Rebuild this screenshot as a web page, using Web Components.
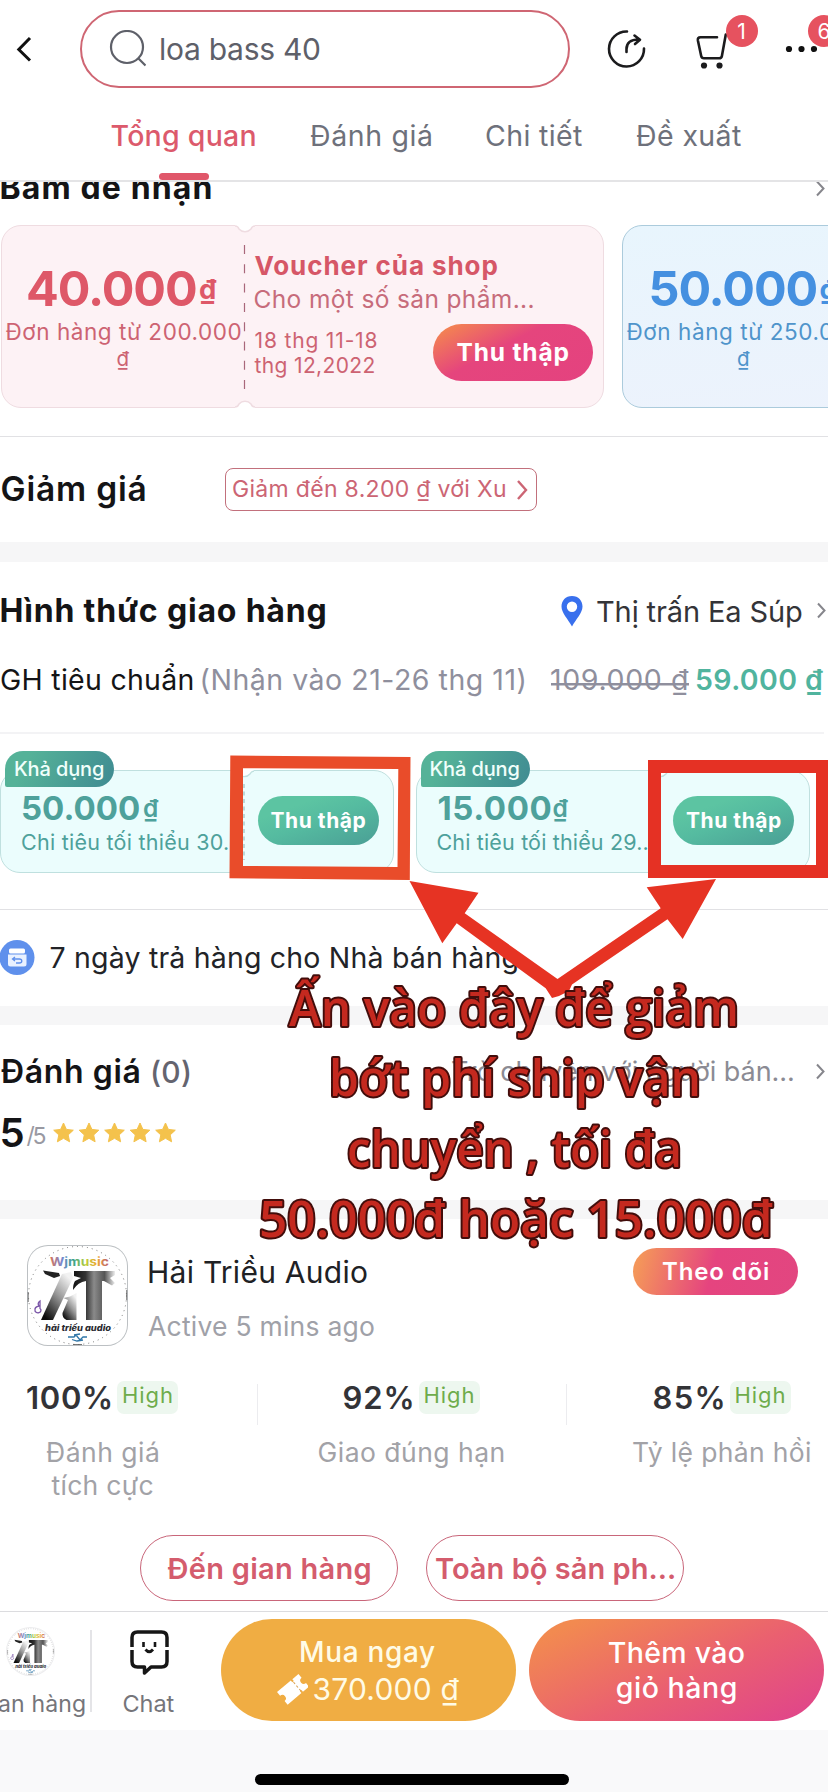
<!DOCTYPE html>
<html lang="vi">
<head>
<meta charset="utf-8">
<title>Hải Triều Audio</title>
<style>
html,body{margin:0;padding:0;background:#fff}
body{font-family:Inter,"Noto Sans","Liberation Sans",sans-serif;width:828px;height:1792px;overflow:hidden}
</style>
</head>
<body>
<product-page></product-page>
<script>
const ctx = document.createElement('canvas').getContext('2d');
const define = (name, html, after) => {
  const tpl = document.createElement('template');
  tpl.innerHTML = html;
  customElements.define(name, class extends HTMLElement {
    connectedCallback() {
      if (this.shadowRoot) return;
      const root = this.attachShadow({ mode: 'open' });
      root.append(tpl.content.cloneNode(true));
      if (after) after(this, root);
    }
  });
};

/* One line of text whose tracking is set so that its ink is exactly "w" pixels wide. */
customElements.define('ui-text', class extends HTMLElement {
  connectedCallback() {
    if (this.shadowRoot) return;
    const root = this.attachShadow({ mode: 'open' });
    root.innerHTML = '<style>:host{display:block;flex:none;white-space:pre;line-height:1}span{display:block;width:max-content}</style><span><slot></slot></span>';
    const size = +this.getAttribute('s'), weight = this.getAttribute('b') || 400, w = +this.getAttribute('w');
    const text = this.textContent, n = [...text].length;
    this.style.fontSize = size + 'px';
    this.style.fontWeight = weight;
    if (this.getAttribute('c')) this.style.color = this.getAttribute('c');
    ctx.font = `${weight} ${size}px Inter, "Noto Sans", sans-serif`;
    const m = ctx.measureText(text);
    const span = root.querySelector('span');
    if (w) {
      const ink = m.actualBoundingBoxLeft + m.actualBoundingBoxRight;
      if (n > 1) span.style.letterSpacing = ((w - ink) / (n - 1)).toFixed(3) + 'px';
      this.style.width = w + 'px';
      span.style.marginLeft = m.actualBoundingBoxLeft.toFixed(2) + 'px';
    }
  }
});

define('ui-chevron', `<style>:host{display:block;flex:none;width:9px;height:17px}svg{display:block}</style>
<svg width="9" height="17" viewBox="0 0 9 17" fill="none" stroke="currentColor" stroke-width="2"><path d="M1 1.500 7.500 8.500 1 15.500"/></svg>`);

define('grey-band', `<style>:host{display:block;background:#f6f6f7}</style>`);

define('count-badge', `<style>:host{position:absolute;display:flex;align-items:center;justify-content:center;width:32px;height:32px;border-radius:50%;background:#e6525f;color:#fff;font-size:21px;line-height:1}</style><slot></slot>`);

define('pill-button', `<style>:host{display:flex;flex:none;flex-direction:column;align-items:center;justify-content:center;box-sizing:border-box;border-radius:60px;color:#fff}</style><slot></slot>`);

define('app-header', `<style>
:host{display:block;height:182px;box-sizing:border-box;border-bottom:2px solid #e4e4e6;background:#fff;position:relative}
.top{display:flex;height:98px;align-items:center}
.back{margin-left:16px}
.box{display:flex;align-items:center;box-sizing:border-box;width:490px;height:78px;margin-left:48px;border:2px solid #cf6673;border-radius:40px;color:#5e6069}
.box svg{margin:0 15px 0 26px}
svg{display:block;flex:none}
.share{margin-left:36.500px}.cart{margin-left:48.500px}.more{margin-left:56px}
.tabs{display:flex;align-items:center;height:76px;color:#6e717b}
.bar{width:50px;height:7px;border-radius:4px;background:#e0576a;margin-left:159px;margin-top:-1px}
</style>
<div class="top">
<svg class="back" width="16" height="26" viewBox="0 0 16 26" fill="none" stroke="#111" stroke-width="3"><path d="M14 2 2.800 13.500 14 24.500"/></svg>
<div class="box"><svg width="38" height="38" viewBox="0 0 38 38" fill="none" stroke="#5e6069" stroke-width="2.200"><circle cx="19" cy="17" r="16"/><path d="m30.500 28.500 7 7"/></svg><ui-text s="30" w="159">loa bass 40</ui-text></div>
<svg class="share" width="40" height="40" viewBox="0 0 40 40" fill="none" stroke="#1b1b1d" stroke-width="2.600" stroke-linecap="round"><path d="M20 2.500A17.500 17.500 0 1 0 37 19.500"/><path d="M19.500 23v-3c0-6 4-9.500 12-9.500M27.500 6.500l5.500 4.200-5 4.300" stroke-linejoin="round"/></svg>
<svg class="cart" width="34" height="40" viewBox="0 0 34 40" fill="none" stroke="#1b1b1d" stroke-width="2.600" stroke-linecap="round" stroke-linejoin="round"><path d="M22 8.300H5.500Q2.300 8.300 2.900 11.500l3.300 15.500Q6.700 29.300 9 29.300H24Q26.500 29.300 26.900 27L30.800 5.500"/><circle cx="9" cy="36.500" r="3.100" fill="#1b1b1d" stroke="none"/><circle cx="24.500" cy="36.500" r="3.100" fill="#1b1b1d" stroke="none"/></svg>
<svg class="more" width="32" height="8" viewBox="0 0 32 8" fill="#111"><circle cx="4" cy="4" r="3.100"/><circle cx="16.500" cy="4" r="3.100"/><circle cx="29" cy="4" r="3.100"/></svg>
</div>
<div class="tabs">
<ui-text s="28.500" b="500" w="144" c="#dc5a6c" style="margin-left:111.500px">Tổng quan</ui-text>
<ui-text s="28.500" w="120" style="margin-left:55.500px">Đánh giá</ui-text>
<ui-text s="28.500" w="96" style="margin-left:55px">Chi tiết</ui-text>
<ui-text s="28.500" w="104" style="margin-left:55px">Đề xuất</ui-text>
</div>
<div class="bar"></div>
<count-badge style="left:725.500px;top:15px">1</count-badge><count-badge style="left:808px;top:15px">6</count-badge>`);

define('shop-voucher', `<style>
:host{display:flex;flex:none;box-sizing:border-box;position:relative;width:603px;height:183px;border:1.500px solid var(--line);border-radius:20px;background:var(--bg);color:var(--ink)}
.left{width:243px;display:flex;flex-direction:column;flex:none}
.amount{display:flex;align-items:center;margin-top:39px;height:48px;margin-left:var(--inset,26px);color:var(--strong)}
.right{display:flex;flex-direction:column;flex:none;width:350px;padding-left:9.500px;box-sizing:border-box}
.notch{position:absolute;left:-1.500px;top:-1.500px}
</style>
<svg class="notch" width="603" height="183" fill="none"><path d="M234 0h20v1q-3 0-4 3a8 8 0 0 1-12 0q-1-3-4-3Z" fill="#fff"/><path d="M234 1q3 0 4 3a8 8 0 0 0 12 0q1-3 4-3" stroke="var(--line)" stroke-width="1.500"/><path d="M234 183h20v-1q-3 0-4-3a8 8 0 0 0-12 0q-1 3-4 3Z" fill="#fff"/><path d="M234 182q3 0 4-3a8 8 0 0 1 12 0q1 3 4 3" stroke="var(--line)" stroke-width="1.500"/><path d="M243.500 20v146" stroke="#a9677a" stroke-width="1.200" stroke-dasharray="9 10.300"/></svg>
<div class="left"><div class="amount"><slot name="amount"></slot><ui-text s="27.500" b="700" w="18" style="margin:1px 0 0 4px">₫</ui-text></div>
<slot name="order"></slot>
<ui-text s="20.500" w="11.500" style="margin:5.500px 0 0 115.500px">₫</ui-text></div>
<div class="right"><slot></slot></div>`, (h, r) => {
  if (h.hasAttribute('plain')) r.querySelector('.notch').remove();
});

define('ship-voucher', `<style>
:host{display:block;flex:none;width:394px;height:103px;box-sizing:border-box;position:relative;border:1.300px solid #bfe0df;border-radius:20px;background:#ebfdfd;color:#4ea19b}
.tag{position:absolute;left:4px;top:-20px;width:109px;height:36px;box-sizing:border-box;border-radius:18px 18px 18px 2px;background:linear-gradient(115deg,#55b298 20%,#3f8b92);color:#f0fffb;display:flex;align-items:center;padding-left:10px}
.row{display:flex;height:100%}
.txt{width:242px;flex:none}
.amount{display:flex;align-items:center;margin:20px 0 0 22px;height:34px}
.notch{position:absolute;left:0;top:-1.500px}
</style>
<svg class="notch" width="390" height="103" fill="none"><path d="M233 0h20v1.500q-3 .5-4 2.500a8 8 0 0 1-12 0q-1-2-4-2.500Z" fill="#fff"/><path d="M233 1q3 .5 4 3a8 8 0 0 0 12 0q1-2.500 4-3" stroke="#bfe0df" stroke-width="1.300"/><path d="M243 14v76" stroke="#8bb5b3" stroke-dasharray="4 3.500"/></svg>
<div class="row"><div class="txt"><div class="amount"><slot name="amount"></slot></div><slot name="rule"></slot></div>
<pill-button style="width:121px;height:49px;margin:25px 0 0 14.500px;background:linear-gradient(160deg,#5cc4a2 25%,#55bba0 50%,#4a9e95)"><ui-text s="21" b="700" w="95">Thu thập</ui-text></pill-button></div>
<div class="tag"><ui-text s="20" b="500" w="88">Khả dụng</ui-text></div>`);

define('shop-logo', `<style>:host{display:block;flex:none}svg{display:block;width:100%;height:100%}</style>
<svg viewBox="0 0 101 101"><defs>
<linearGradient id="rb"><stop offset="0" stop-color="#d8745a"/><stop offset=".2" stop-color="#7a86d0"/><stop offset=".4" stop-color="#3ba38c"/><stop offset=".6" stop-color="#b9cf3c"/><stop offset=".8" stop-color="#f0a838"/><stop offset="1" stop-color="#b55a72"/></linearGradient>
<linearGradient id="g1" x1="0" y1="1" x2=".7" y2="0"><stop offset=".1" stop-color="#0b0b0b"/><stop offset=".6" stop-color="#999"/><stop offset="1" stop-color="#f2f2f2"/></linearGradient>
<linearGradient id="g2" x1="0" y1="0" x2="1" y2="0"><stop offset="0" stop-color="#111"/><stop offset=".3" stop-color="#333"/><stop offset=".5" stop-color="#8a8a8a"/><stop offset=".75" stop-color="#555"/><stop offset="1" stop-color="#eee"/></linearGradient>
</defs>
<circle cx="50.500" cy="50.500" r="49" fill="#fff" stroke="#555" stroke-width=".8" stroke-dasharray="1 4"/>
<path d="M1.200 47v10M99.700 45v10M46 99.500h9" stroke="#555" stroke-width=".8"/>
<text x="23" y="21" font-family="Inter,sans-serif" font-size="12" font-weight="700" textLength="59" lengthAdjust="spacingAndGlyphs" fill="url(#rb)">Wjmusic</text>
<path d="M16 25.500 32 28l1 3-6 2-9-4Z" fill="#222"/>
<path d="M35 29 14 75H26L46 33 44 27Z" fill="url(#g1)"/>
<path d="M36.500 53 43 51.500 49.500 48V75H39.500Q35 73 35.500 68L41 55Z" fill="url(#g1)"/>
<path d="M47 26H88V30L83 33 88 38 85 40.500 77 36H75V75H59V36Q51 37 46 45Q46 39 48 36L54 33 47 31Z" fill="url(#g2)"/>
<path d="M8 65a3 2.500 0 1 0 5-1.500V56q-3 2-1 5-4.500 1-4 4" fill="none" stroke="#7a55a8" stroke-width="1.300"/>
<text x="18" y="85.500" font-family="Inter,sans-serif" font-size="8.500" font-weight="800" font-style="italic" textLength="66" lengthAdjust="spacingAndGlyphs" fill="#2a2a30">hải triều audio</text>
<path d="M41 92h6l2-2 4 5 3-3h4M45 94.500l5 1.500 6-1M47 90l6-1" stroke="#2f76a8" stroke-width="1.300" fill="none"/>
</svg>`);

define('shop-stat', `<style>
:host{display:flex;flex:none;flex-direction:column;align-items:center;width:200px;color:#a2a2a7}
.v{display:flex;align-items:center;height:33px;gap:6px;color:#333337;padding-left:1px}
.tag{display:flex;align-items:center;justify-content:center;width:61px;height:33px;padding-bottom:5px;box-sizing:border-box;border-radius:7px;background:#edf7ef;color:#6eac4b}
.l{display:flex;flex-direction:column;align-items:center;gap:6px;margin-top:25px}
</style><div class="v"><slot name="value"></slot><div class="tag"><ui-text s="22" w="49">High</ui-text></div></div><div class="l"><slot></slot></div>`);

define('shop-panel', `<style>
:host{display:block;height:392px;box-sizing:border-box;padding-top:26px}
.head{display:flex;height:101px}
.logo{width:101px;height:101px;box-sizing:border-box;margin-left:27px;border-radius:21px;box-shadow:inset 0 0 0 1px #bcc0c3}
.name{width:483.500px;margin-left:21px;display:flex;flex-direction:column}
.stats{display:flex;margin:35px 0 0 2px;height:119px}
.sep{width:1px;height:41px;margin-top:3px;background:#ececef}
.links{display:flex;gap:28px;margin:35px 0 0 140px}
.links pill-button{width:258px;height:66px;border:1.300px solid #c9667a;color:#d45c6d}
</style>
<div class="head"><shop-logo class="logo"></shop-logo>
<div class="name"><ui-text s="30" w="218" c="#202124" style="margin-top:12px">Hải Triều Audio</ui-text><ui-text s="26.500" w="226" c="#a0a1a8" style="margin:26px 0 0 -1px">Active 5 mins ago</ui-text></div>
<pill-button style="width:165px;height:47px;margin-top:3px;background:linear-gradient(105deg,#f4965a 5%,#e5447f 48%,#e24680)"><ui-text s="24" b="600" w="106">Theo dõi</ui-text></pill-button></div>
<div class="stats">
<shop-stat><ui-text slot="value" s="31" b="600" w="84">100%</ui-text><ui-text s="26.500" w="112">Đánh giá</ui-text><ui-text s="26.500" w="101">tích cực</ui-text></shop-stat>
<div class="sep" style="margin-left:54.500px"></div>
<shop-stat style="margin-left:53.500px"><ui-text slot="value" s="31" b="600" w="69">92%</ui-text><ui-text s="26.500" w="185">Giao đúng hạn</ui-text></shop-stat>
<div class="sep" style="margin-left:54.500px"></div>
<shop-stat style="margin-left:55px"><ui-text slot="value" s="31" b="600" w="70">85%</ui-text><ui-text s="26.500" w="177">Tỷ lệ phản hồi</ui-text></shop-stat>
</div>
<div class="links"><pill-button><ui-text s="29" b="600" w="203">Đến gian hàng</ui-text></pill-button><pill-button><ui-text s="29" b="600" w="238">Toàn bộ sản ph...</ui-text></pill-button></div>`);

define('buy-bar', `<style>
:host{display:block;height:181px;background:#f9f9fa}
.bar{display:flex;height:119px;box-sizing:border-box;border-top:1.500px solid #dcdcdf;background:#fff;color:#75757a}
.shop{width:90px;box-sizing:border-box;display:flex;flex-direction:column}
.mini{width:47px;height:47px;margin:16px 0 0 7px;border-radius:50%;box-shadow:0 0 0 1px #ececee}
.sep{width:1.500px;height:82px;margin-top:18px;background:#e4e4e7}
.chat{width:129px;display:flex;flex-direction:column}
svg{display:block;flex:none}
.price{display:flex;align-items:center;gap:6px;height:30px}
.home{width:314px;height:11px;margin:44px 0 0 255px;border-radius:6px;background:#000}
</style>
<div class="bar">
<div class="shop"><shop-logo class="mini"></shop-logo><ui-text s="23" w="86" style="margin:17.500px 0 0 -1px">an hàng</ui-text></div>
<div class="sep"></div>
<div class="chat"><svg style="margin:16.500px 0 0 37.500px" width="40" height="48" viewBox="0 0 40 48" fill="none" stroke="#161616" stroke-width="3.500" stroke-linecap="butt" stroke-linejoin="round"><path d="M3 18V8.500Q3 3 8.500 3h24Q38 3 38 8.500V18M38 21V32.500Q38 38 32.500 38H22l-6.500 6V38h-7Q3 38 3 32.500V21"/><path d="M14.500 13v5M26 13v5" stroke-width="2.600"/><path d="M16.500 20.500q3.700 4.500 7.500 0" stroke-width="2.800"/></svg><ui-text s="23.500" w="51" style="margin:15.500px 0 0 32px">Chat</ui-text></div>
<pill-button style="width:295px;height:102px;margin-top:6.500px;padding-top:3.500px;background:#f0ad43;color:#fffbe6;gap:8px"><ui-text s="28" b="500" w="134">Mua ngay</ui-text>
<div class="price"><svg width="31" height="31" viewBox="0 0 31 31"><g transform="rotate(-40 15.500 15.500)"><path d="M2 7.500h18v2.300h2V7.500h8v4.800a3.500 3.500 0 0 0 0 7V24h-8v-2.300h-2V24H2v-4.700a3.500 3.500 0 0 0 0-7Z" fill="#fff"/><path d="M21 10.500v12" stroke="#d9a050" stroke-dasharray="2.500 2"/></g></svg><ui-text s="30" w="146">370.000 ₫</ui-text></div></pill-button>
<pill-button style="width:295.500px;height:102px;margin:6.500px 0 0 13px;padding-top:2.500px;background:linear-gradient(155deg,#f28a50 10%,#ea6070 55%,#e0458a 95%);gap:7px"><ui-text s="28.500" b="500" w="135">Thêm vào</ui-text><ui-text s="28.500" b="500" w="119">giỏ hàng</ui-text></pill-button>
</div><div class="home"></div>`);

/* Hand-added callout floating above the page. */
define('page-note', `<style>:host{position:absolute;left:0;top:0;width:828px;height:1792px;pointer-events:none}svg{display:block}
text{font-family:"Open Sans","Noto Sans",sans-serif;font-weight:600;font-size:50px;fill:#c4291f;stroke:#420d0b;stroke-width:4px;stroke-linejoin:round;paint-order:stroke}
.core{stroke:#c4291f;stroke-width:1.200px}</style>
<svg width="828" height="1792">
<path fill="#e94c2a" fill-rule="evenodd" d="M230.300 755.500 410.500 757 409.800 880 229.500 878.300ZM243 768.300V866L397.500 867 398.300 769Z"/>
<path fill="#e53124" fill-rule="evenodd" d="M648 760H828V878H648ZM661 773V865H816V773Z"/>
<path fill="#e63323" d="M409.500 881 478.500 892.700 464.700 913.300 557.500 979 660.700 908.300 646.700 887.300 716 879 682.700 939 667.500 919.300 572 984.500 569 991 559 996 552 998 545.700 988.300 456.700 923.300 442.300 943.300Z"/>
<text x="289" y="1025.500" textLength="450" lengthAdjust="spacingAndGlyphs">Ấn vào đây để giảm</text>
<text x="329" y="1096" textLength="372" lengthAdjust="spacingAndGlyphs">bớt phí ship vận</text>
<text x="347" y="1166.500" textLength="335" lengthAdjust="spacingAndGlyphs">chuyển , tối đa</text>
<text x="259" y="1237" textLength="514" lengthAdjust="spacingAndGlyphs">50.000đ hoặc 15.000đ</text>
</svg>`);

define('product-page', `<style>
:host{display:block;position:relative;width:828px;height:1792px;overflow:hidden;background:#fff;color:#141416}
.row{display:flex;align-items:center}
svg{display:block;flex:none}
.claim{height:43px;align-items:flex-start;overflow:hidden}
.vouchers{display:flex;gap:17.500px;margin-left:1px;height:183px;width:900px}
.line{height:1px;background:#e1e1e4}
ui-chevron{color:#86868c}
.xu{display:flex;align-items:center;box-sizing:border-box;width:312px;height:43px;margin-left:80.500px;padding-left:7px;border:1.300px solid #c2707c;border-radius:8px;color:#cc6574}
.ships{display:flex;gap:21.500px;height:175px;padding:36px 0 0 0;box-sizing:border-box;width:900px}
</style>
<app-header></app-header>
<div class="row claim"><ui-text s="32" b="700" w="209" style="margin:-10px 0 0 1.500px">Bấm để nhận</ui-text><ui-chevron style="margin:-2px 0 0 605px"></ui-chevron></div>
<div class="vouchers">
<shop-voucher style="--bg:#fdf2f5;--line:#efdce1;--ink:#cd6372;--strong:#de5868">
<ui-text slot="amount" s="48.500" b="700" w="168">40.000</ui-text><ui-text slot="order" s="22.500" w="235" style="margin:7.500px 0 0 3.500px">Đơn hàng từ 200.000</ui-text>
<ui-text s="26" b="700" w="243" c="#d65767" style="margin-top:27px">Voucher của shop</ui-text>
<ui-text s="24.500" w="279" c="#c76c7b" style="margin-top:8px">Cho một số sản phẩm...</ui-text>
<div style="display:flex;margin-top:12.500px"><div><ui-text s="21" w="122" style="margin-top:6px">18 thg 11-18</ui-text><ui-text s="21" w="120" style="margin-top:4px">thg 12,2022</ui-text></div>
<pill-button style="width:160px;height:57px;margin-left:56px;background:linear-gradient(152deg,#f4874f 5%,#e5457d 42%,#e4427f)"><ui-text s="24.500" b="700" w="112">Thu thập</ui-text></pill-button></div>
</shop-voucher>
<shop-voucher plain style="--inset:29px;--bg:linear-gradient(175deg,#e8f5fd,#edf2fc);--line:#abcbdc;--ink:#4f94cb;--strong:#4590e0"><ui-text slot="amount" s="48.500" b="700" w="165">50.000</ui-text><ui-text slot="order" s="22.500" w="235" style="margin:7.500px 0 0 4px">Đơn hàng từ 250.000</ui-text></shop-voucher>
</div>
<div class="line" style="margin-top:28px"></div>
<div class="row" style="height:105px"><ui-text s="33.500" b="600" w="143" style="margin-left:1.500px">Giảm giá</ui-text>
<div class="xu"><ui-text s="23" w="272">Giảm đến 8.200 ₫ với Xu</ui-text><svg style="margin-left:12px" width="11" height="20" viewBox="0 0 11 20" fill="none" stroke="#cc6574" stroke-width="2.400"><path d="m1 1 8 9-8 9"/></svg></div></div>
<grey-band style="height:20px"></grey-band>
<div class="row" style="height:97px"><ui-text s="32" b="700" w="324" style="margin-left:1.500px">Hình thức giao hàng</ui-text>
<svg style="margin-left:235.500px" width="22" height="32" viewBox="0 0 22 32"><path fill="#3970ed" fill-rule="evenodd" d="M11 1C4.500 1 .5 5.800.5 11.500.5 18 7 24 11 31.500 15 24 21.500 18 21.500 11.500 21.500 5.800 17.500 1 11 1Zm0 5.500a5.200 5.200 0 1 1 0 10.400 5.200 5.200 0 0 1 0-10.400Z"/></svg>
<ui-text s="29" w="205" c="#343438" style="margin:2px 0 0 14px">Thị trấn Ea Súp</ui-text><ui-chevron style="margin-left:14.500px"></ui-chevron></div>
<div class="row" style="height:42px;margin-bottom:31px"><ui-text s="28.500" w="191.500" style="margin-left:1px">GH tiêu chuẩn</ui-text><ui-text s="28.500" w="322" c="#8f8f9d" style="margin-left:10px">(Nhận vào 21-26 thg 11)</ui-text><ui-text s="28.500" w="138" c="#8f8f9d" style="margin-left:26.500px;background:linear-gradient(#8f8f9d,#8f8f9d) 0 17px/100% 2.500px no-repeat">109.000 ₫</ui-text><ui-text s="28.500" b="600" w="127" c="#50b49e" style="margin-left:7px">59.000 ₫</ui-text></div>
<div class="line" style="height:2px;background:#f3f3f5;width:824px"></div>
<div class="ships">
<ship-voucher><ui-text slot="amount" s="33" b="700" w="116">50.000</ui-text><ui-text slot="amount" s="24.500" b="600" w="15" style="margin-left:5px">₫</ui-text><ui-text slot="rule" s="21.500" w="206" style="margin:6.500px 0 0 21px">Chi tiêu tối thiểu 30.</ui-text></ship-voucher>
<ship-voucher><ui-text slot="amount" s="33" b="700" w="112">15.000</ui-text><ui-text slot="amount" s="24.500" b="600" w="15" style="margin-left:3px">₫</ui-text><ui-text slot="rule" s="21.500" w="210" style="margin:6.500px 0 0 21px">Chi tiêu tối thiểu 29..</ui-text></ship-voucher>
</div>
<div class="line"></div>
<div class="row" style="height:96px"><svg width="35" height="36" viewBox="0 0 35 36"><circle cx="17" cy="17.500" r="17.500" fill="#5f90ec"/><rect x="9" y="8.500" width="16" height="5" rx="1.500" fill="#fff"/><path d="M8 14.500h18.500V24q0 2.500-2.500 2.500H10.500Q8 26.500 8 24Z" fill="#e9f1ff"/><path d="M15 17l-2.500 2 2.500 2M12.800 19h6.500q2.500 0 2.500 2t-2.500 2H16" fill="none" stroke="#5f90ec" stroke-width="1.300"/></svg><ui-text s="28.500" w="467" c="#222327" style="margin-left:15.500px">7 ngày trả hàng cho Nhà bán hàng</ui-text></div>
<grey-band style="height:19px"></grey-band>
<div class="row" style="height:93px"><ui-text s="32" b="600" w="138.500" style="margin-left:1px">Đánh giá</ui-text><ui-text s="30" b="500" w="38" c="#64646f" style="margin-left:12.500px">(0)</ui-text><ui-text s="27" w="341" c="#8b8b94" style="margin-left:262px">Trò chuyện với người bán...</ui-text><ui-chevron style="margin-left:23px"></ui-chevron></div>
<div class="row" style="height:30px;margin-bottom:52px"><ui-text s="40" b="600" w="23" style="margin-left:1.500px">5</ui-text><ui-text s="23" w="19" c="#9999a2" style="margin:6px 7px 0 2px">/5</ui-text><svg width="124" height="22" viewBox="0 0 124 22" fill="#f4c24c" stroke="#f4c24c" stroke-linejoin="round"><defs><path id="s" d="m10.500 1 2.900 6.400 6.900.8-5.100 4.700 1.400 6.900-6.100-3.500-6.100 3.500 1.400-6.900L.7 8.200l6.900-.8Z"/></defs><use href="#s"/><use href="#s" x="25.500"/><use href="#s" x="51"/><use href="#s" x="76.500"/><use href="#s" x="102"/></svg></div>
<grey-band style="height:19px"></grey-band>
<shop-panel></shop-panel>
<buy-bar></buy-bar>
<page-note></page-note>`);
</script>
</body>
</html>
